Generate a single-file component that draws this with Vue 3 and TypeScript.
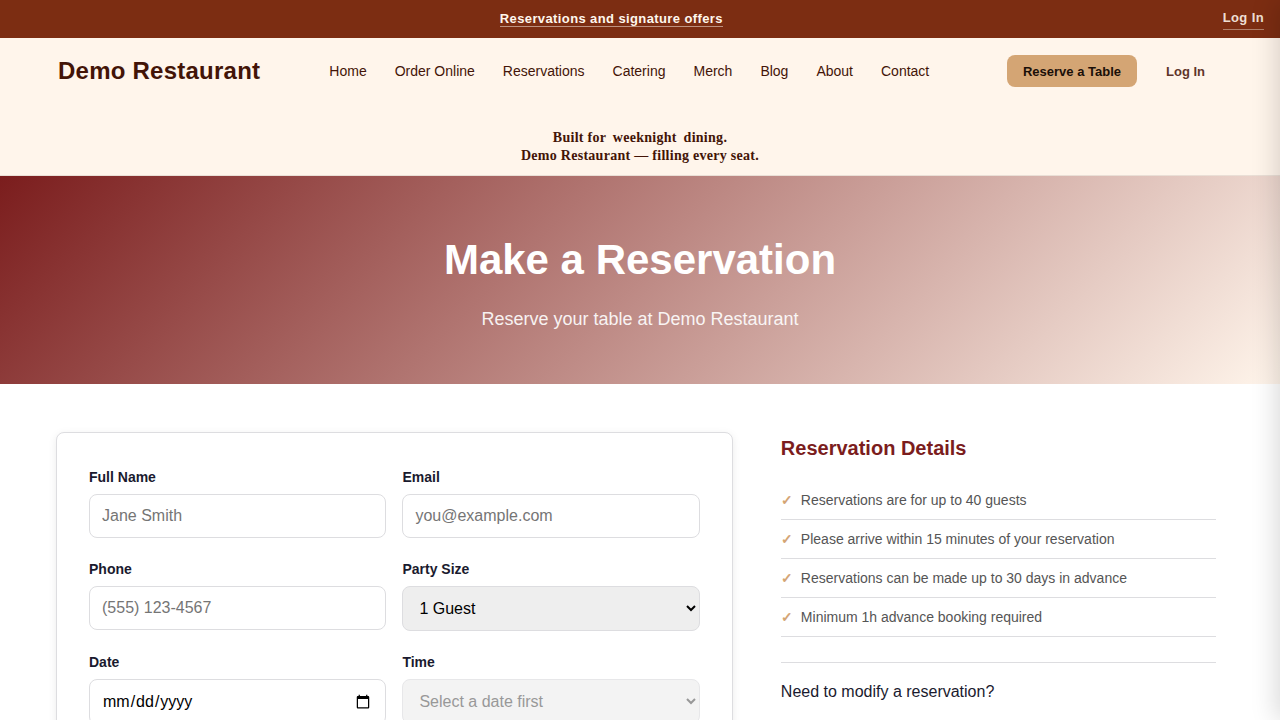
<script setup lang="ts">
import { ref } from 'vue'

interface NavLink {
  label: string
  href: string
}

const navLinks: NavLink[] = [
  { label: 'Home', href: '#home' },
  { label: 'Order Online', href: '#order' },
  { label: 'Reservations', href: '#reservations' },
  { label: 'Catering', href: '#catering' },
  { label: 'Merch', href: '#merch' },
  { label: 'Blog', href: '#blog' },
  { label: 'About', href: '#about' },
  { label: 'Contact', href: '#contact' },
]

const details: string[] = [
  'Reservations are for up to 40 guests',
  'Please arrive within 15 minutes of your reservation',
  'Reservations can be made up to 30 days in advance',
  'Minimum 1h advance booking required',
]

const fullName = ref('')
const email = ref('')
const phone = ref('')
const partySize = ref('1')
const date = ref('')
const time = ref('')
</script>

<template>
  <div class="page">
    <div class="promo">
      <div class="promo-center">
        <a class="promo-link" href="#offers">Reservations and signature offers</a>
      </div>
      <a class="promo-login" href="#login">Log In</a>
    </div>

    <header class="header">
      <div class="header-row">
        <a class="brand" href="#home">Demo Restaurant</a>
        <nav class="nav">
          <a v-for="link in navLinks" :key="link.label" :href="link.href">{{ link.label }}</a>
        </nav>
        <div class="actions">
          <button class="reserve" type="button">Reserve a Table</button>
          <a class="login" href="#login">Log In</a>
        </div>
      </div>
      <div class="tagline">
        <p>Built for <span class="rotating">weeknight</span> dining.</p>
        <p>Demo Restaurant — filling every seat.</p>
      </div>
    </header>

    <section class="hero">
      <h1>Make a Reservation</h1>
      <p>Reserve your table at Demo Restaurant</p>
    </section>

    <main class="content">
      <form class="card" @submit.prevent>
        <div class="field">
          <label for="full-name">Full Name</label>
          <input id="full-name" v-model="fullName" type="text" placeholder="Jane Smith" />
        </div>
        <div class="field">
          <label for="email">Email</label>
          <input id="email" v-model="email" type="email" placeholder="you@example.com" />
        </div>
        <div class="field">
          <label for="phone">Phone</label>
          <input id="phone" v-model="phone" type="tel" placeholder="(555) 123-4567" />
        </div>
        <div class="field">
          <label for="party-size">Party Size</label>
          <select id="party-size" v-model="partySize">
            <option value="1">1 Guest</option>
          </select>
        </div>
        <div class="field">
          <label for="date">Date</label>
          <input id="date" v-model="date" class="date" type="date" />
        </div>
        <div class="field">
          <label for="time">Time</label>
          <select id="time" v-model="time" disabled>
            <option value="">Select a date first</option>
          </select>
        </div>
      </form>

      <aside class="details">
        <h2>Reservation Details</h2>
        <ul>
          <li v-for="item in details" :key="item">
            <span class="check" aria-hidden="true">✓</span>
            <span>{{ item }}</span>
          </li>
        </ul>
        <div class="modify">
          <p>Need to modify a reservation?</p>
        </div>
      </aside>
    </main>

    <div class="drawer" aria-hidden="true"></div>
  </div>
</template>

<style>
body {
  margin: 0;
  background: #ffffff;
}
</style>

<style scoped>
.page {
  font-family: "Liberation Sans", Arial, sans-serif;
  font-size: 16px;
  color: #1a1a2e;
}

h1,
h2,
p,
ul {
  margin: 0;
  padding: 0;
}

a {
  text-decoration: none;
}

.promo {
  display: flex;
  align-items: center;
  height: 38px;
  padding-right: 16px;
  background: #7c2d12;
  font-size: 13px;
  font-weight: 700;
  letter-spacing: 0.03em;
}

.promo-center {
  flex: 1;
  display: flex;
  justify-content: center;
}

.promo-link {
  line-height: 15px;
  color: #fff7ed;
  border-bottom: 1px solid rgba(255, 247, 237, 0.5);
}

.promo-login {
  padding: 2px 0 4px;
  line-height: 15px;
  color: rgba(255, 247, 237, 0.9);
  border-bottom: 1px solid rgba(255, 247, 237, 0.4);
}

.header {
  background: #fff5eb;
  border-bottom: 1px solid #eadfd6;
}

.header-row {
  display: flex;
  align-items: center;
  height: 66px;
  padding: 0 59px 0 58px;
}

.brand {
  margin-right: 69px;
  font-size: 24px;
  font-weight: 700;
  letter-spacing: 0.01em;
  color: #431407;
}

.nav {
  display: flex;
  gap: 28px;
  font-size: 14px;
}

.nav a {
  color: #431407;
}

.actions {
  display: flex;
  align-items: center;
  gap: 13px;
  margin-left: auto;
  font-size: 13px;
  font-weight: 700;
}

.reserve {
  height: 32px;
  padding: 0 16px;
  border: 0;
  border-radius: 8px;
  background: #d4a574;
  color: #1a0f08;
  font: inherit;
}

.login {
  padding: 8px 16px;
  color: #5f352a;
}

.tagline {
  padding: 25px 0 10px;
  font-family: "Liberation Serif", "Times New Roman", serif;
  font-size: 14px;
  font-weight: 700;
  line-height: 18px;
  letter-spacing: 0.02em;
  text-align: center;
  color: #431407;
}

.rotating {
  display: inline-block;
  padding: 0 3px;
}

.hero {
  padding: 48px 24px 50px;
  background: linear-gradient(135deg, #7b1d1d, #fff5eb);
  text-align: center;
  color: #ffffff;
}

.hero h1 {
  margin-bottom: 8px;
  font-size: 42px;
  line-height: 72px;
}

.hero p {
  font-size: 18px;
  line-height: 30px;
  opacity: 0.9;
}

.content {
  display: grid;
  grid-template-columns: 14fr 9fr;
  align-items: start;
  gap: 48px;
  padding: 48px 64px 48px 56px;
}

.card {
  display: grid;
  grid-template-columns: 1fr 1fr;
  gap: 20px 16px;
  padding: 33px 32px 32px;
  border: 1px solid #dddde0;
  border-radius: 8px;
  background: #ffffff;
  box-shadow: 0 2px 8px rgba(0, 0, 0, 0.08);
}

.field {
  display: flex;
  flex-direction: column;
  min-width: 0;
}

.field label {
  margin-bottom: 6px;
  font-size: 14px;
  font-weight: 700;
  line-height: 22px;
}

.field input,
.field select {
  box-sizing: border-box;
  width: 100%;
  height: 44px;
  padding: 0 12px;
  border: 1px solid #dddde0;
  border-radius: 8px;
  background: #ffffff;
  font-family: inherit;
  font-size: 16px;
  color: #000000;
}

.field input.date {
  height: 46px;
}

.field select {
  height: 45px;
  background: #eeeeee;
}

.field select:disabled {
  color: #6d6d6d;
  opacity: 0.7;
}

.details h2 {
  margin-bottom: 16px;
  font-size: 20px;
  line-height: 33px;
  color: #7b1d1d;
}

.details ul {
  list-style: none;
}

.details li {
  display: flex;
  padding: 8px 0;
  border-bottom: 1px solid #dddde0;
  font-size: 14px;
  line-height: 22px;
  color: #555555;
}

.check {
  flex: 0 0 20px;
  font-weight: 700;
  color: #d4a574;
}

.modify {
  margin-top: 25px;
  padding-top: 16px;
  border-top: 1px solid #dddde0;
  line-height: 26px;
}

.drawer {
  position: fixed;
  top: 0;
  bottom: 0;
  left: 100%;
  width: 320px;
  background: #ffffff;
  box-shadow: -4px 0 24px rgba(0, 0, 0, 0.15);
}
</style>
